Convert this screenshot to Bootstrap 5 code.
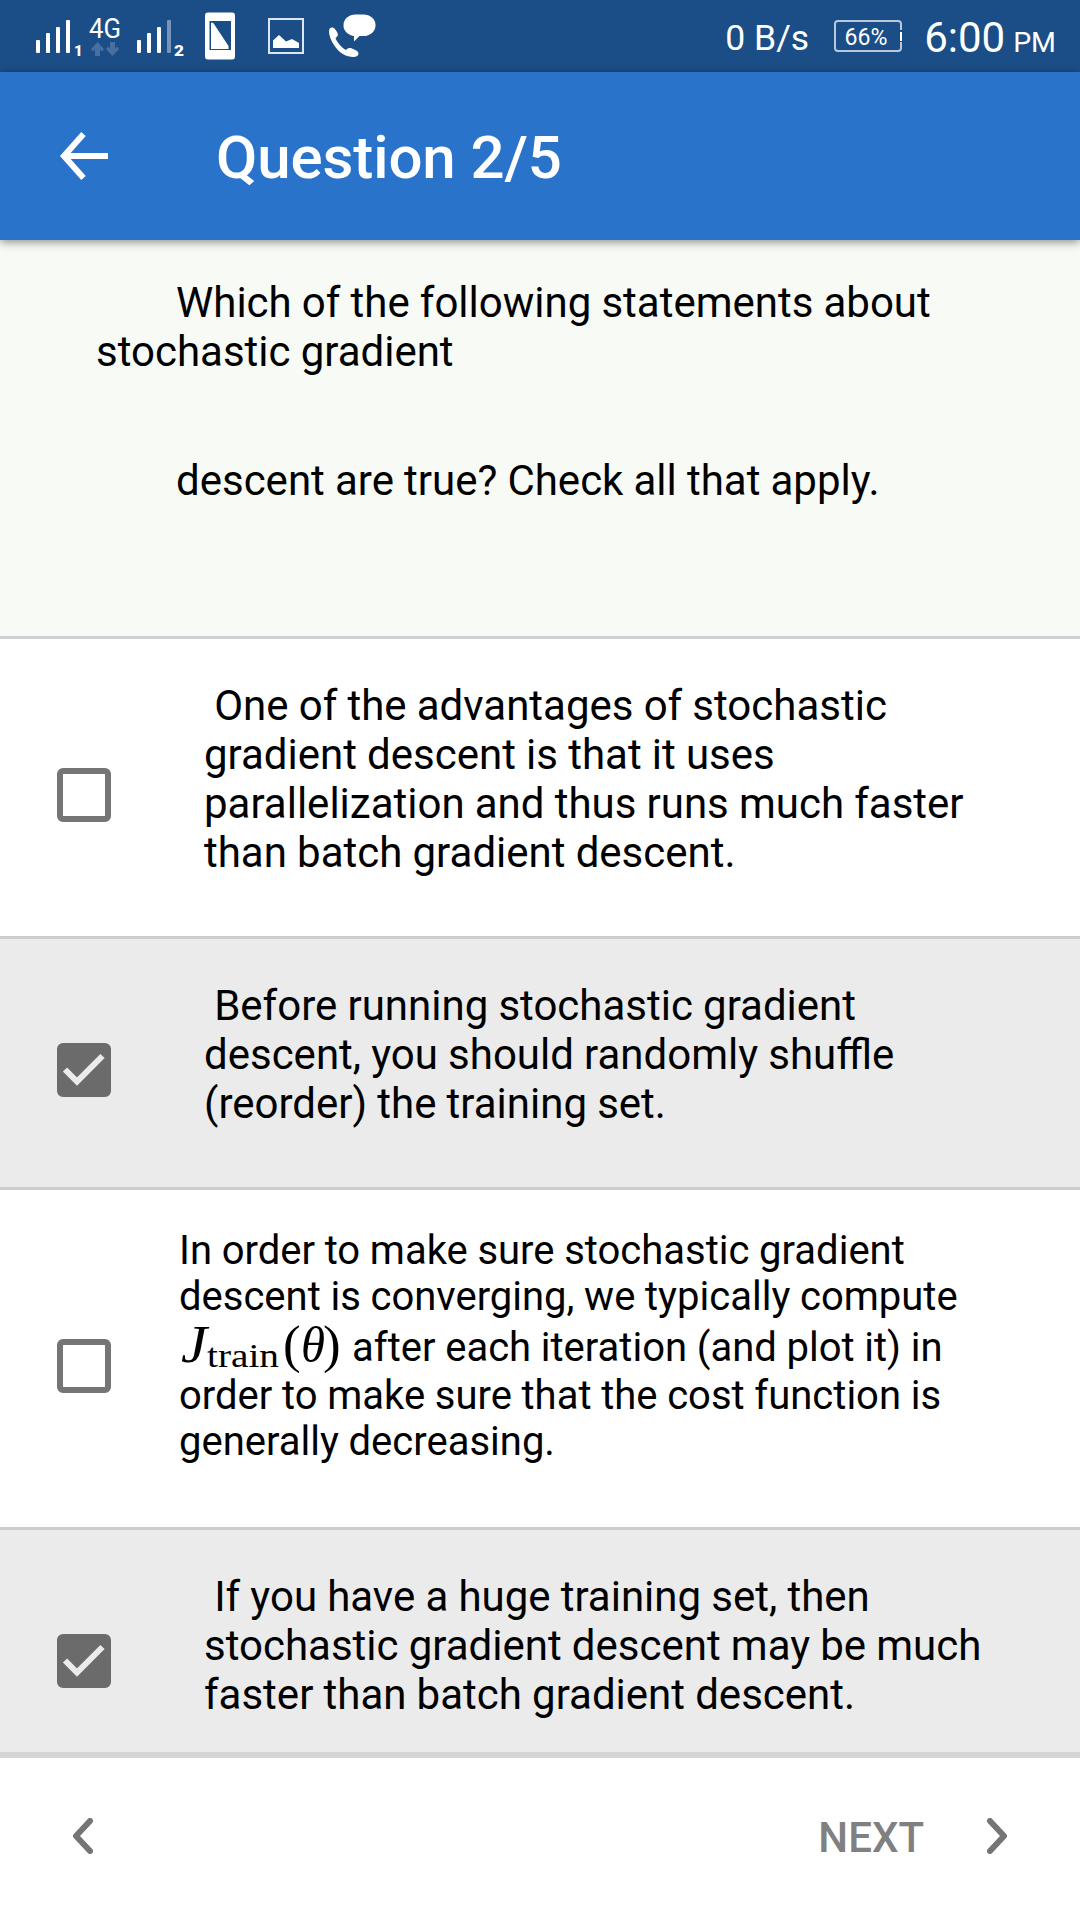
<!DOCTYPE html>
<html lang="en">
<head>
<meta charset="utf-8">
<meta name="viewport" content="width=device-width, initial-scale=1">
<title>Question 2/5</title>
<link href="https://cdn.jsdelivr.net/npm/bootstrap@5.3.0/dist/css/bootstrap.min.css" rel="stylesheet">
<style>
body{font-family:Roboto,"Noto Sans",sans-serif;color:#000;width:1080px;height:1920px;background:#fff}
svg{display:block;flex:none}
.status{height:72px;background:#1b4e86;color:#fff;padding-right:24px}
.rate{font-size:35.5px;line-height:42px;margin-right:25px;padding-top:17px}
.battery{width:69px;height:33px;margin:20px 21px 0 0}
.clock{font-size:42px;line-height:48px;padding-top:14px}
.clock .ampm{font-size:28.5px;margin-left:8px}
.appbar{height:168px;background:#2a73cb;color:#fff;padding-left:57px;box-shadow:0 2px 9px rgba(0,0,0,.45);z-index:2}
.appbar h1{font-size:60px;line-height:70px;font-weight:500;margin:4px 0 0 105px;letter-spacing:-.1px}
.prompt{height:399px;background:#f8faf5;border-bottom:3px solid #d0d0d0;padding:38px 0 0 96px;font-size:42px;line-height:49px;word-spacing:-.3px}
.prompt p{white-space:pre;margin:0 0 80px;text-indent:80px}
.choice{border-bottom:3px solid #cdcdcd;padding-left:57px;flex:none;font-size:42px;line-height:49px;word-spacing:-.25px}
.choice p{white-space:pre;margin:0;align-self:flex-start;padding:42px 0 0 93px}
.choice.tall{height:300px}
.choice.short{height:251px}
.choice.formula{height:340px;font-size:40px;line-height:46px}
.choice.formula p{padding:38px 0 0 68px}
.choice.formula .mathline{display:flex;height:53px;line-height:55px}
.mathline svg{margin:-10px 0}
.choice.picked{background:#ebebeb}
.tick{width:54px;height:54px;border:6px solid #757575;border-radius:6px;margin-top:15px;flex:none}
.picked .tick{background:#6b6b6b;border-color:#6b6b6b;margin-top:13px}
.picked .tick svg{margin:-6px}
.pager{height:168px;border-top:6px solid #d6d6d4;background:#fff;padding:0 73px 6px}
.next{font-size:42px;font-weight:500;line-height:50px;color:#808080;margin-right:63px;padding-top:3px}
</style>
</head>
<body class="d-flex flex-column overflow-hidden m-0">
<div class="status d-flex align-items-start justify-content-between flex-shrink-0">
  <svg width="400" height="72" fill="#fff">
    <g><rect x="36" y="40" width="4" height="13" rx="1"/><rect x="46" y="33" width="4" height="20" rx="1"/><rect x="56" y="27" width="4" height="26" rx="1"/><rect x="66" y="20" width="4" height="33" rx="1"/></g>
    <text x="74" y="56" font-size="15" font-weight="900">1</text>
    <text x="89" y="38" font-size="28" textLength="32" lengthAdjust="spacingAndGlyphs">4G</text>
    <g fill="#476f9f"><path d="M97.500 42l6.500 7-2 2.500-2-2V56h-5v-6.500l-2 2-2-2.500z"/><path d="M112.500 56l6.500-7-2-2.500-2 2V42h-5v6.500l-2-2-2 2.500z"/></g>
    <g><rect x="137" y="40" width="4" height="13" rx="1"/><rect x="147" y="33" width="4" height="20" rx="1"/><rect x="157" y="27" width="4" height="26" rx="1"/><rect x="167" y="20" width="4" height="33" rx="1" fill="#7895b9"/></g>
    <text x="174" y="56" font-size="15" font-weight="900" textLength="10" lengthAdjust="spacingAndGlyphs">2</text>
    <rect x="205" y="12.500" width="30" height="47" rx="3"/><rect x="209.500" y="21" width="21.500" height="29" fill="#1b4e86"/><path d="M211 23q1.500-1.500 3 1l14.500 22v3H211z"/>
    <rect x="269" y="19" width="34" height="34" fill="none" stroke="#dce6f0" stroke-width="2"/><path d="M273 40.500l6-5.500 7 6.500 6-2.500 7 4v5h-26z"/>
    <rect x="343.500" y="14.500" width="32" height="21.500" rx="12" ry="10.500"/><path d="M354 34v7.500l7-7z"/>
    <path d="M332 27.500c2 0 3.500 2 5 4.500 1.500 3 1 4-1.500 6 1.500 4.500 6 9.500 10.500 12 2-2 3.500-2.500 6-1.500 4 1.500 6.500 3 6.500 5s-2 3.500-5 3.500c-7 0-14-4-18.500-10.500-4-5.500-6-11-6-15 0-2.500 1-4 3-4z"/>
  </svg>
  <div class="d-flex align-items-start">
    <div class="rate">0 B/s</div>
    <svg class="battery" fill="none" viewBox="0 0 69 33"><path d="M67 10V4q0-3-3-3H4Q1 1 1 4v24q0 3 3 3h60q3 0 3-3v-6" stroke="#b9c9dc" stroke-width="2"/><path d="M67 12v9" stroke="#fff" stroke-width="2"/><text x="10.500" y="25" fill="#fff" font-size="23.500" textLength="43" lengthAdjust="spacingAndGlyphs">66%</text></svg>
    <div class="clock">6:00<span class="ampm">PM</span></div>
  </div>
</div>
<header class="appbar d-flex align-items-center position-relative flex-shrink-0">
  <svg width="54" height="54" fill="none" stroke="#fff" stroke-width="6"><path d="M51 27H7M26.500 5L7 27l19.500 22"/></svg>
  <h1>Question 2/5</h1>
</header>
<main class="d-flex flex-column flex-fill overflow-hidden" style="min-height:0">
  <section class="prompt flex-shrink-0"><p>Which of the following statements about
stochastic gradient</p><p>descent are true? Check all that apply.</p></section>
  <div class="choice tall d-flex align-items-center"><div class="tick"></div><p> One of the advantages of stochastic
gradient descent is that it uses
parallelization and thus runs much faster
than batch gradient descent.</p></div>
  <div class="choice short picked d-flex align-items-center"><div class="tick"><svg width="54" height="54" fill="none" stroke="#ebebeb" stroke-width="6"><path d="M8 26.500L20 38.500L45.500 13"/></svg></div><p> Before running stochastic gradient
descent, you should randomly shuffle
(reorder) the training set.</p></div>
  <div class="choice formula d-flex align-items-center"><div class="tick"></div><p>In order to make sure stochastic gradient
descent is converging, we typically compute
<span class="mathline"><svg width="173" height="74" viewBox="0 -10 173 74" font-family="Liberation Serif,serif"><g font-style="italic"><text x="2" y="42" font-size="52" textLength="26" lengthAdjust="spacingAndGlyphs">J</text><text x="122" y="42" font-size="50" textLength="24" lengthAdjust="spacingAndGlyphs">θ</text></g><text x="28" y="47" font-size="33" textLength="72" lengthAdjust="spacingAndGlyphs">train</text><text x="104" y="42" font-size="53">(</text><text x="144" y="42" font-size="53">)</text></svg><span>after each iteration (and plot it) in</span></span>order to make sure that the cost function is
generally decreasing.</p></div>
  <div class="choice short picked d-flex align-items-center"><div class="tick"><svg width="54" height="54" fill="none" stroke="#ebebeb" stroke-width="6"><path d="M8 26.500L20 38.500L45.500 13"/></svg></div><p> If you have a huge training set, then
stochastic gradient descent may be much
faster than batch gradient descent.</p></div>
</main>
<footer class="pager d-flex align-items-center justify-content-between flex-shrink-0">
  <svg width="20" height="36" fill="none" stroke="#757575" stroke-width="6" stroke-linecap="round" stroke-linejoin="round"><path d="M17 3L3 18l14 15"/></svg>
  <div class="d-flex align-items-center"><span class="next">NEXT</span><svg width="20" height="36" fill="none" stroke="#757575" stroke-width="6" stroke-linecap="round" stroke-linejoin="round"><path d="M3 3l14 15L3 33"/></svg></div>
</footer>
<script src="https://cdn.jsdelivr.net/npm/bootstrap@5.3.0/dist/js/bootstrap.bundle.min.js"></script>
</body>
</html>
